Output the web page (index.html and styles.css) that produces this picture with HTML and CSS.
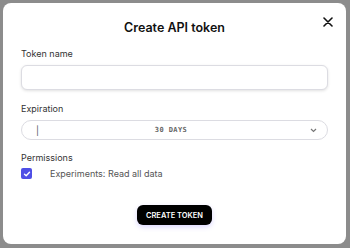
FILE: index.html
```html
<!DOCTYPE html>
<html lang="en">
<head>
    <meta charset="UTF-8">
    <meta name="viewport" content="width=device-width, initial-scale=1.0">
    <title>Create API token</title>
    <link rel="stylesheet" href="styles.css">
</head>
<body>

<div class="modal">
    <button class="close" aria-label="Close">
        <svg width="10" height="10" viewBox="0 0 10 10"><path d="M1 1L9 9M9 1L1 9" stroke="#111" stroke-width="1.6" stroke-linecap="round"/></svg>
    </button>
    <h1>Create API token</h1>

    <!-- Token name -->
    <label class="label">Token name</label>
    <input class="input" type="text">

    <!-- Expiration -->
    <label class="label">Expiration</label>
    <div class="select">
        <span class="caret">|</span>
        <span class="value">30 DAYS</span>
        <svg width="7" height="5" viewBox="0 0 7 5"><path d="M1 1L3.5 3.5L6 1" fill="none" stroke="#777" stroke-width="1.2"/></svg>
    </div>

    <!-- Permissions -->
    <label class="label label-perm">Permissions</label>
    <div class="perm">
        <span class="check">
            <svg width="8" height="8" viewBox="0 0 8 8"><path d="M1.5 4.2L3.2 5.8L6.5 2.3" fill="none" stroke="#fff" stroke-width="1.4" stroke-linecap="round" stroke-linejoin="round"/></svg>
        </span>
        <span>Experiments: Read all data</span>
    </div>

    <div class="actions">
        <button class="submit">CREATE TOKEN</button>
    </div>
</div>

</body>
</html>
```

FILE: styles.css
```css
html, body {
    margin: 0;
    height: 100%;
}
body {
    font-family: Inter, "Noto Sans", sans-serif;
    background-color: #8c8c8c;
    padding: 3px 4px 4px 3px;
    box-sizing: border-box;
}
.modal {
    position: relative;
    background: #fff;
    border-radius: 8px;
    height: 100%;
    box-sizing: border-box;
    padding: 16px 18px 0 18px;
    display: flex;
    flex-direction: column;
}
h1 {
    margin: 0 0 11px 0;
    text-align: center;
    font-size: 12.5px;
    font-weight: 600;
    color: #111;
    line-height: 18px;
}
.close {
    position: absolute;
    top: 14px;
    right: 13px;
    background: none;
    border: none;
    padding: 0;
    width: 10px;
    height: 10px;
    display: flex;
}
.label {
    font-size: 9px;
    color: #333;
    line-height: 12px;
    margin-bottom: 5px;
}
.label-perm {
    margin-bottom: 4px;
}
.input {
    height: 25px;
    border: 1px solid #dcdce2;
    border-radius: 6px;
    box-shadow: 0 1px 3px rgba(0, 0, 0, 0.12);
    box-sizing: border-box;
    margin: 0 0 13px 0;
    width: 100%;
}
.select {
    height: 20px;
    border: 1px solid #dcdce2;
    border-radius: 10px;
    box-sizing: border-box;
    display: flex;
    align-items: center;
    padding: 0 10px 0 14px;
    margin-bottom: 12px;
}
.caret {
    font-size: 9px;
    color: #555;
    width: 20px;
}
.value {
    flex: 1;
    text-align: center;
    font-family: "DejaVu Sans Mono", monospace;
    font-size: 7px;
    font-weight: bold;
    letter-spacing: 0.4px;
    color: #666;
    padding-right: 24px;
}
.perm {
    display: flex;
    align-items: center;
    font-size: 9px;
    color: #555;
    gap: 18px;
}
.check {
    width: 11px;
    height: 11px;
    border-radius: 2px;
    background: #4f4fe6;
    display: flex;
    align-items: center;
    justify-content: center;
}
.actions {
    display: flex;
    justify-content: center;
    margin-top: 26px;
}
.submit {
    background: #000;
    color: #fff;
    border: none;
    border-radius: 6px;
    font-family: Inter, sans-serif;
    font-size: 7.5px;
    font-weight: 600;
    padding: 0 9px;
    height: 20px;
    box-shadow: 0 2px 5px rgba(110, 90, 255, 0.25);
}
```
